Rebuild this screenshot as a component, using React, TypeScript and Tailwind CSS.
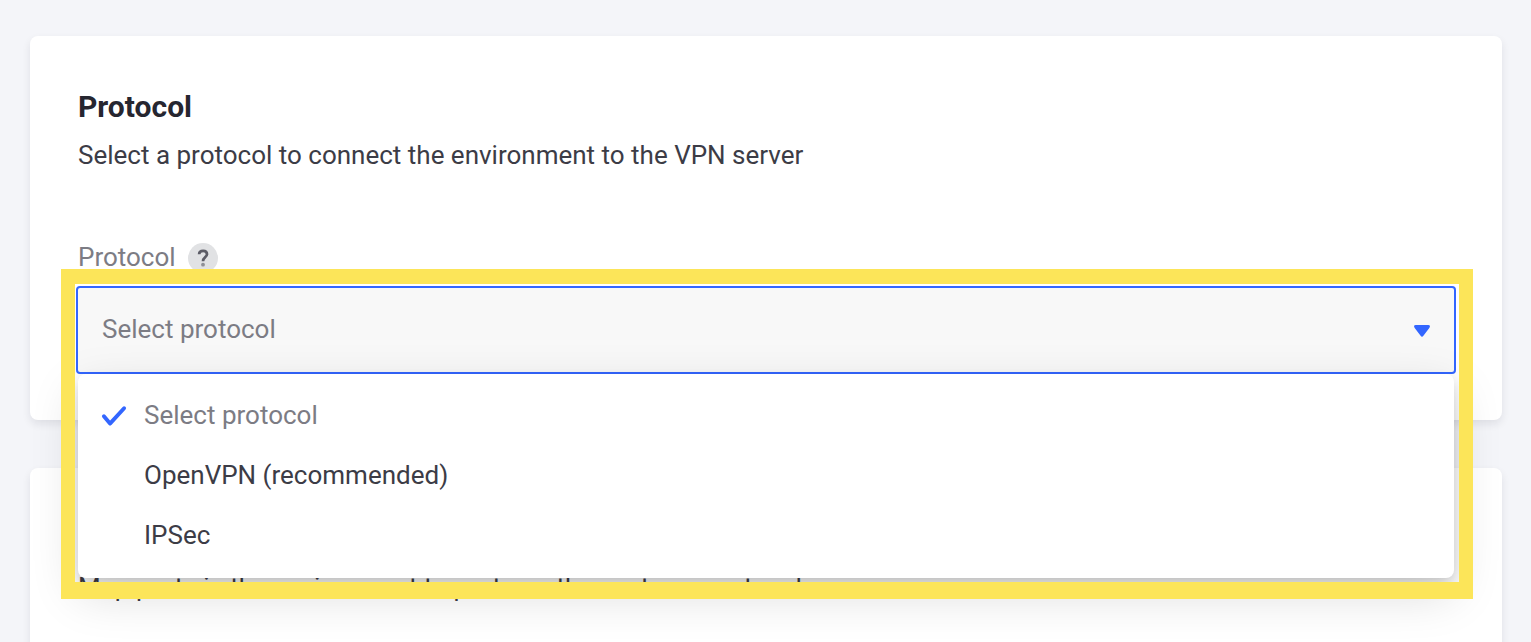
const options = ["Select protocol", "OpenVPN (recommended)", "IPSec"];

function CheckIcon() {
  return (
    <svg width="26" height="22" viewBox="0 0 26 22" fill="none" className="block">
      <path d="M2.9 11.3 L9 18.6 L23.1 3.2" stroke="#3366ff" strokeWidth="3.9" strokeLinecap="round" strokeLinejoin="round" />
    </svg>
  );
}

function HelpIcon() {
  return (
    <svg width="30" height="30" viewBox="0 0 30 30" fill="none" className="mt-0.5 block">
      <circle cx="15" cy="15" r="15" fill="#e1e2e4" />
      <path d="M11.1 11.2 C11.2 9 12.8 7.9 15.1 7.9 C17.4 7.9 19 9.2 19 11.3 C19 13.9 15 14.2 15 18.2" stroke="#5c5c66" strokeWidth="2.7" />
      <circle cx="15" cy="21.7" r="1.9" fill="#8e8f96" />
    </svg>
  );
}

function ProtocolSelect() {
  return (
    <div className="relative -mx-0.5 mt-[13px]">
      <div className="flex h-[88px] items-center justify-between rounded-[4px] border-2 border-[#3366ff] bg-[#f8f8f8] pr-6 pl-6">
        <span className="pb-0.5 text-[#7c7c84]">Select protocol</span>
        <svg width="16" height="12" viewBox="0 0 16 12" className="mt-0.5 block">
          <path d="M1.8 0 H14.2 Q17 0.2 15.3 2.9 L9.4 10.8 Q8 12.9 6.6 10.8 L0.7 2.9 Q-1 0.2 1.8 0 Z" fill="#3366ff" />
        </svg>
      </div>
      <ul className="absolute top-[88px] right-0.5 left-0.5 z-10 h-[204px] rounded-[8px] bg-white pt-3 shadow-[0_16px_48px_rgba(0,0,0,0.15),0_6px_14px_-2px_rgba(0,0,0,0.18)]">
        {options.map((option, i) => (
          <li key={option} className="flex h-[60px] items-center pl-[23px]">
            <span className="w-[43px]">{i === 0 && <CheckIcon />}</span>
            <span className={i === 0 ? "pb-0.5 text-[#7c7c84]" : "pb-0.5 text-[#3c3c46]"}>{option}</span>
          </li>
        ))}
      </ul>
      <div className="pointer-events-none absolute -top-[17px] -right-[17px] -left-[15px] z-20 h-[330px] border-t-[15px] border-r-[14px] border-b-[17px] border-l-[14px] border-[#fce559]" />
    </div>
  );
}

export default function App() {
  return (
    <main className="flex h-[642px] flex-col gap-12 overflow-hidden bg-[#f4f5f9] pt-9 pr-[29px] pl-[30px] font-['Roboto',sans-serif] text-[26px] leading-[32px]">
      <section className="h-[384px] shrink-0 rounded-[8px] bg-white px-12 pt-[52px] shadow-[0_4px_8px_rgba(20,20,40,0.09)]">
        <h2 className="text-[30px] leading-[38px] font-bold text-[#262630]">Protocol</h2>
        <p className="mt-[13px] text-[#3c3c46]">Select a protocol to connect the environment to the VPN server</p>
        <div className="mt-[70px] flex h-8 items-center gap-[12px]">
          <span className="text-[#7c7c84]">Protocol</span>
          <HelpIcon />
        </div>
        <ProtocolSelect />
      </section>
      <section className="h-[384px] shrink-0 rounded-[8px] bg-white px-12 pt-[103px] shadow-[0_4px_8px_rgba(20,20,40,0.09)]">
        <p className="text-[#3c3c46]">Map ports in the environment to ports on the customer network</p>
      </section>
    </main>
  );
}
